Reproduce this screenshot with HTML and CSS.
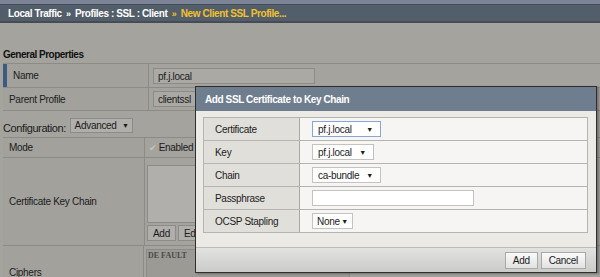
FILE: index.html
```html
<!DOCTYPE html>
<html>
<head>
    <title>New Client SSL Profile</title>
    <link rel="stylesheet" href="styles.css">
</head>
<body>
    <div class="top-strip"></div>
    <div class="crumbs">
        Local Traffic <span class="sep">»</span> Profiles : SSL : Client <span class="sep current">»</span> <span class="current">New Client SSL Profile...</span>
    </div>

    <div class="section-title">General Properties</div>
    <div class="prop-table">
        <div class="prop-row name-row active">
            <div class="prop-label">Name</div>
            <div class="prop-value"><span class="text-in wide">pf.j.local</span></div>
        </div>
        <div class="prop-row name-row">
            <div class="prop-label">Parent Profile</div>
            <div class="prop-value"><span class="text-in">clientssl</span></div>
        </div>
    </div>

    <div class="config-line">
        Configuration: <span class="select-box">Advanced <span class="arrow">▼</span></span>
    </div>
    <div class="prop-table lower">
        <div class="prop-row mode-row">
            <div class="prop-label">Mode</div>
            <div class="prop-value"><span class="check">✔</span> Enabled</div>
        </div>
        <div class="prop-row chain-row">
            <div class="prop-label">Certificate Key Chain</div>
            <div class="prop-value stack">
                <div class="chain-box"></div>
                <div class="chain-buttons">
                    <span class="page-btn">Add</span>
                    <span class="page-btn">Edit</span>
                </div>
            </div>
        </div>
        <div class="prop-row cipher-row">
            <div class="prop-label">Ciphers</div>
            <div class="prop-value stack"><div class="cipher-box">DE FAULT</div></div>
        </div>
    </div>

    <div class="dialog">
        <div class="dialog-title">Add SSL Certificate to Key Chain</div>
        <div class="dialog-body">
            <div class="dlg-table">
                <div class="dlg-row">
                    <div class="dlg-label">Certificate</div>
                    <div class="dlg-value"><span class="dlg-select focus w69">pf.j.local <span class="arrow">▼</span></span></div>
                </div>
                <div class="dlg-row">
                    <div class="dlg-label">Key</div>
                    <div class="dlg-value"><span class="dlg-select w62">pf.j.local <span class="arrow">▼</span></span></div>
                </div>
                <div class="dlg-row">
                    <div class="dlg-label">Chain</div>
                    <div class="dlg-value"><span class="dlg-select w69">ca-bundle <span class="arrow">▼</span></span></div>
                </div>
                <div class="dlg-row">
                    <div class="dlg-label">Passphrase</div>
                    <div class="dlg-value"><span class="pass-in"></span></div>
                </div>
                <div class="dlg-row">
                    <div class="dlg-label">OCSP Stapling</div>
                    <div class="dlg-value"><span class="dlg-select w40">None <span class="arrow">▼</span></span></div>
                </div>
            </div>
        </div>
        <div class="dialog-footer">
            <span class="dlg-btn">Add</span>
            <span class="dlg-btn">Cancel</span>
        </div>
    </div>
</body>
</html>
```

FILE: styles.css
```css
body {
    font-family: "Liberation Sans", Arial, sans-serif;
    font-size: 10px;
    letter-spacing: -0.3px;
    margin: 0;
    background: #a4a39e;
    color: #1c1c1c;
    overflow: hidden;
    height: 277px;
    position: relative;
}
.top-strip {
    height: 4px;
    background: #7b8597;
}
.crumbs {
    height: 16px;
    line-height: 17px;
    background: #535e6b;
    border-top: 1px solid #444c56;
    border-bottom: 2px solid #454c55;
    color: #fff;
    font-weight: bold;
    letter-spacing: -0.4px;
    padding-left: 8px;
}
.crumbs .sep {
    font-size: 9px;
    margin: 0 2px;
}
.crumbs .current {
    color: #f2c12e;
}
.section-title {
    margin: 25px 0 0 3px;
    height: 15px;
    line-height: 14px;
    color: #111;
    font-weight: bold;
    letter-spacing: -0.5px;
}
.prop-table {
    margin-left: 3px;
    border-top: 1px solid #8c8b87;
}
.prop-row {
    display: flex;
    border-bottom: 1px solid #8c8b87;
}
.prop-label {
    width: 139px;
    padding-left: 6px;
    border-right: 1px solid #8c8b87;
    background: #a2a19c;
    display: flex;
    align-items: center;
}
.prop-value {
    flex: 1;
    padding-left: 4px;
    display: flex;
    align-items: center;
}
.prop-value.stack {
    flex-direction: column;
    align-items: flex-start;
    padding-left: 2px;
}
.name-row {
    height: 23px;
}
.name-row + .name-row {
    height: 22px;
}
.active .prop-label {
    box-shadow: inset 4px 0 0 #3b5b82;
    padding-left: 10px;
    width: 135px;
}
.text-in {
    display: inline-block;
    background: #aaa9a4;
    border: 1px solid #8c8b87;
    height: 14px;
    line-height: 15px;
    padding: 0 4px;
    width: 40px;
}
.text-in.wide {
    width: 152px;
}
.select-box {
    display: inline-block;
    background: #b0afab;
    border: 1px solid #8c8b87;
    height: 13px;
    line-height: 13px;
    padding: 0 3px 0 4px;
    font-size: 10px;
    letter-spacing: -0.3px;
    vertical-align: 3px;
    margin-left: 1px;
}
.arrow {
    font-size: 7px;
    margin-left: 3px;
    vertical-align: 1px;
}
.config-line {
    height: 19px;
    padding-top: 7px;
    line-height: 20px;
    font-size: 11px;
    letter-spacing: -0.4px;
    padding-left: 3px;
}
.lower .prop-label {
    width: 135px;
}
.mode-row {
    height: 19px;
}
.check {
    color: #c4c3bf;
    font-size: 9px;
    margin-right: 2px;
}
.chain-row {
    height: 87px;
}
.chain-box {
    width: 200px;
    height: 56px;
    background: #b0afab;
    border: 1px solid #8c8b87;
    margin-top: 7px;
}
.chain-buttons {
    margin-top: 2px;
    display: flex;
    gap: 2px;
}
.page-btn {
    display: inline-block;
    background: #b0afab;
    border: 1px solid #8c8b87;
    padding: 0 5px;
    height: 14px;
    line-height: 15px;
    font-size: 10px;
}
.cipher-row {
    height: 40px;
}
.cipher-row .prop-label {
    align-items: flex-start;
    padding-top: 21px;
    box-sizing: border-box;
    width: 141px;
}
.cipher-box {
    width: 200px;
    height: 40px;
    margin-top: 3px;
    background: #9b9a95;
    border: 1px solid #8c8b87;
    font: bold 8px "Liberation Serif", serif;
    letter-spacing: 0;
    color: #4a4a48;
    padding: 1px 1px;
}
.dialog {
    position: absolute;
    left: 195px;
    top: 86px;
    width: 400px;
    height: 185px;
    border: 1px solid #2e2e2e;
    background: #ebeae5;
    box-shadow: 2px 1px 2px rgba(0,0,0,0.3);
}
.dialog-title {
    height: 24px;
    line-height: 26px;
    background: #6f7e8f;
    color: #fff;
    font-weight: bold;
    letter-spacing: -0.4px;
    padding-left: 9px;
}
.dialog-body {
    padding: 6px 0 0 7px;
    height: 130px;
    border-bottom: 1px solid #bcbcb9;
}
.dlg-table {
    width: 383px;
    border: 1px solid #b4b4b2;
    border-bottom: 0;
}
.dlg-row {
    display: flex;
    height: 22px;
    border-bottom: 1px solid #b4b4b2;
}
.dlg-label {
    width: 84px;
    padding-left: 11px;
    background: #e0dfda;
    border-right: 1px solid #a9a9a6;
    display: flex;
    align-items: center;
}
.dlg-value {
    flex: 1;
    padding-left: 12px;
    background: #f6f5f3;
    display: flex;
    align-items: center;
}
.dlg-select {
    display: inline-block;
    height: 14px;
    line-height: 15px;
    padding: 0 5px;
    background: #fff;
    border: 1px solid #c3c3c1;
    position: relative;
    box-sizing: content-box;
}
.dlg-select .arrow {
    position: absolute;
    right: 7px;
    top: 0;
}
.dlg-select.focus {
    border-color: #86a7d6;
}
.w69 { width: 57px; }
.w62 { width: 50px; }
.dlg-select.w40 {
    width: 32px;
    padding: 0 3px 0 4px;
}
.dlg-select.w40 .arrow {
    right: 4px;
}
.pass-in {
    display: inline-block;
    width: 160px;
    height: 14px;
    border: 1px solid #c3c3c1;
    background: #fff;
}
.dialog-footer {
    height: 24px;
    background: linear-gradient(#e2e2e0, #cbcbc9);
    display: flex;
    justify-content: flex-end;
    align-items: center;
    gap: 3px;
    padding-right: 10px;
}
.dlg-btn {
    display: inline-block;
    background: linear-gradient(#fafafa, #e2e2e2);
    border: 1px solid #a9a9a9;
    height: 15px;
    line-height: 16px;
    padding: 0 7px;
    margin-top: 1px;
}
```
